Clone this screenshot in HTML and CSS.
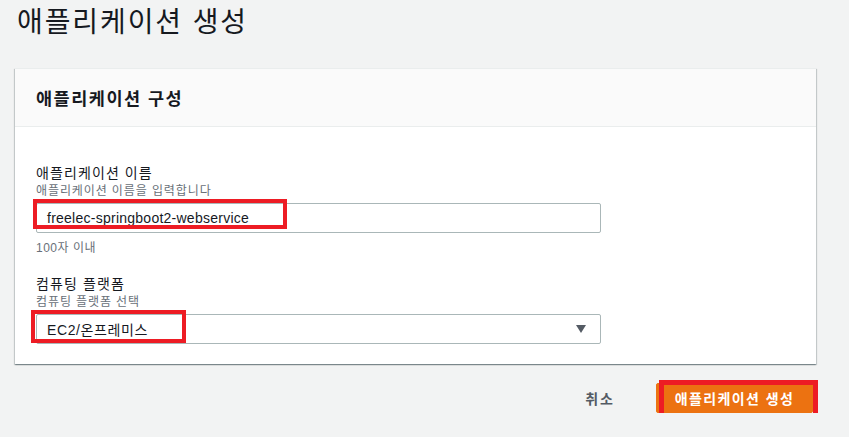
FILE: index.html
```html
<!DOCTYPE html>
<html lang="ko">
<head>
<meta charset="utf-8">
<title>애플리케이션 생성</title>
<link rel="stylesheet" href="styles.css">
</head>
<body>
<main class="page">
  <h1 class="page-title">애플리케이션 생성</h1>
  <section class="card">
    <header class="card-header">
      <h2 class="card-title">애플리케이션 구성</h2>
    </header>
    <div class="card-body">
      <div class="field">
        <div class="field-label">애플리케이션 이름</div>
        <div class="field-desc">애플리케이션 이름을 입력합니다</div>
        <div class="control">
          <div class="input latin">freelec-springboot2-webservice</div>
          <span class="mark mark-name"></span>
        </div>
        <div class="field-hint">100자 이내</div>
      </div>
      <div class="field field-platform">
        <div class="field-label">컴퓨팅 플랫폼</div>
        <div class="field-desc">컴퓨팅 플랫폼 선택</div>
        <div class="control">
          <div class="input select">
            <span class="ko">EC2/온프레미스</span>
            <svg class="caret" width="10" height="8" viewBox="0 0 10 8"><path d="M0 0H10L5 8Z" fill="#545b64"/></svg>
          </div>
          <span class="mark mark-platform"></span>
        </div>
      </div>
    </div>
  </section>
  <div class="actions">
    <button class="btn-link">취소</button>
    <div class="control">
      <button class="btn-primary">애플리케이션 생성</button>
      <span class="mark mark-btn"></span>
    </div>
  </div>
</main>
</body>
</html>
```

FILE: styles.css
```css
* { box-sizing: border-box; }
html, body { margin: 0; }
body {
  background: #f2f3f3;
  color: #16191f;
  font-family: "Liberation Sans", "Noto Sans CJK KR", sans-serif;
}
.page {
  padding: 2px 33px 0 15px;
}
.page-title {
  margin: 0 0 30px 2px;
  font-size: 28px;
  font-weight: 400;
  line-height: 36px;
  letter-spacing: 1.9px;
  font-family: "Noto Sans CJK KR", sans-serif;
}
.card {
  background: #fff;
  border-top: 1px solid #eaeded;
  box-shadow: 0 1px 1px 0 rgba(0, 28, 36, .3), 1px 1px 1px 0 rgba(0, 28, 36, .15), -1px 1px 1px 0 rgba(0, 28, 36, .15);
}
.card-header {
  background: #fafafa;
  border-bottom: 1px solid #eaeded;
  height: 58px;
  padding: 0 21px;
  display: flex;
  align-items: center;
}
.card-title {
  margin: 0;
  font-size: 17.5px;
  font-weight: 700;
  letter-spacing: 1.5px;
  font-family: "Noto Sans CJK KR", sans-serif;
}
.card-body {
  padding: 36px 215px 20px 21px;
}
.field-label {
  font-size: 14px;
  line-height: 20px;
  letter-spacing: 1.1px;
}
.field-desc, .field-hint {
  font-size: 12px;
  line-height: 16px;
  color: #687078;
  letter-spacing: 0.9px;
}
.field-hint { letter-spacing: 0.5px; }
.field-desc { margin-bottom: 4px; }
.field-hint { margin-top: 7px; }
.field-platform { margin-top: 18px; }
.control { position: relative; }
.input {
  height: 30px;
  border: 1px solid #aab7b8;
  border-radius: 2px;
  background: #fff;
  padding: 0 10px;
  display: flex;
  align-items: center;
  font-size: 14px;
}
.latin { letter-spacing: 0.25px; }
.ko { letter-spacing: 0.6px; }
.select { justify-content: space-between; padding-right: 14px; }
.caret { display: block; }
.mark {
  position: absolute;
  border: 4px solid #ed1c24;
  pointer-events: none;
}
.mark-name { left: -3px; top: -4px; width: 254px; height: 30px; }
.mark-platform { left: -5px; top: -4px; width: 155px; height: 33px; }
.mark-btn { left: 3px; top: -3px; width: 159px; height: 39px; border-width: 5px; }
.actions {
  margin-top: 19px;
  display: flex;
  justify-content: flex-end;
  align-items: center;
  gap: 41px;
  padding-right: 3px;
}
.btn-link {
  background: none;
  border: 0;
  padding: 0;
  font: 700 14px "Noto Sans CJK KR", sans-serif;
  letter-spacing: 2px;
  color: #545b64;
}
.btn-primary {
  display: block;
  width: 157px;
  height: 30px;
  padding: 0;
  background: #ec7211;
  border: 1px solid #ec7211;
  border-radius: 2px;
  color: #fff;
  font: 700 14px "Noto Sans CJK KR", sans-serif;
  letter-spacing: 1.4px;
}
```
